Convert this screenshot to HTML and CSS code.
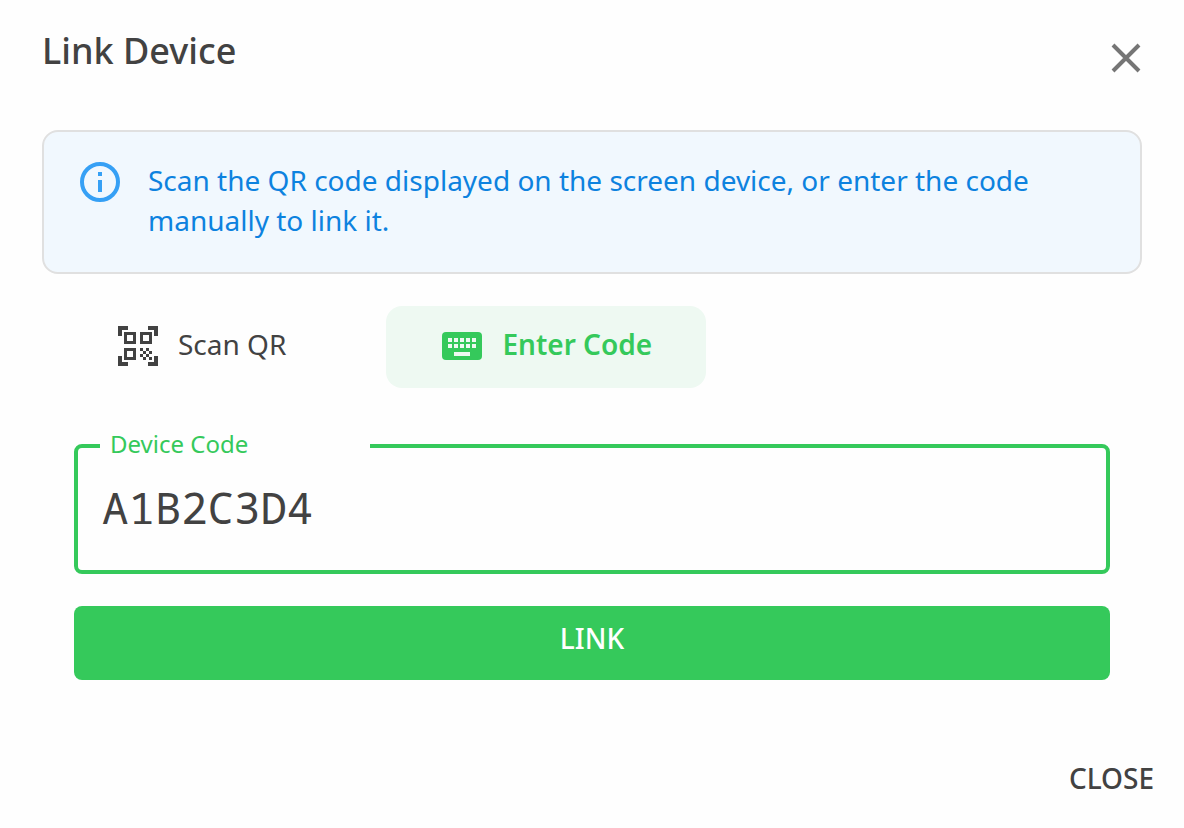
FILE: index.html
```
<!DOCTYPE html>
<html lang="en">
<head>
    <meta charset="UTF-8">
    <meta name="viewport" content="width=device-width, initial-scale=1.0">
    <title>Link Device</title>
    <link rel="stylesheet" href="styles.css">
</head>
<body>

<main class="dialog" role="dialog" aria-labelledby="dialogTitle">
    <header class="dialog-header">
        <h1 class="dialog-title" id="dialogTitle">Link Device</h1>
        <button class="dialog-dismiss" type="button" aria-label="Close dialog">
            <svg class="icon" viewBox="0 0 40 40" aria-hidden="true">
                <path d="M7 7L33 33M33 7L7 33" fill="none" stroke="currentColor" stroke-width="4"/>
            </svg>
        </button>
    </header>

    <div class="banner">
        <svg class="icon banner-icon" viewBox="0 0 40 40" aria-hidden="true">
            <circle cx="20" cy="20" r="18" fill="none" stroke="currentColor" stroke-width="4"/>
            <path d="M18 10h4v4h-4zM18 18h4v12h-4z" fill="currentColor"/>
        </svg>
        <p class="banner-text">Scan the QR code displayed on the screen device, or enter the code manually to link it.</p>
    </div>

    <div class="tabs" role="tablist">
        <button class="tab" type="button" role="tab" aria-selected="false">
            <svg class="icon" viewBox="0 0 40 40" aria-hidden="true" shape-rendering="crispEdges">
                <!-- corner brackets -->
                <path d="M0 0h10v4H4v6H0zM30 0h10v10h-4V4h-6zM0 30h4v6h6v4H0zM36 30h4v10H30v-4h6z" fill="currentColor"/>
                <!-- finder squares -->
                <path d="M7.5 7.5h9v9h-9zM23.5 7.5h9v9h-9zM7.5 23.5h9v9h-9z" fill="none" stroke="currentColor" stroke-width="3"/>
                <path d="M22 22h3v3h-3zM28 22h3v3h-3zM25 25h3v3h-3zM31 25h3v3h-3zM22 28h3v3h-3zM28 28h3v3h-3zM25 31h3v3h-3zM31 31h3v3h-3z" fill="currentColor"/>
            </svg>
            <span>Scan QR</span>
        </button>
        <button class="tab active" type="button" role="tab" aria-selected="true">
            <svg class="icon" viewBox="0 0 40 40" aria-hidden="true">
                <rect y="6" width="40" height="28" rx="4" fill="currentColor"/>
                <path class="keys" d="M6 12h4v4H6zM12 12h4v4h-4zM18 12h4v4h-4zM24 12h4v4h-4zM30 12h4v4h-4zM6 18h4v4H6zM12 18h4v4h-4zM18 18h4v4h-4zM24 18h4v4h-4zM30 18h4v4h-4zM12 26h16v4H12z"/>
            </svg>
            <span>Enter Code</span>
        </button>
    </div>

    <form class="code-form">
        <fieldset class="code-field">
            <legend class="code-legend"><label for="deviceCode">Device Code</label></legend>
            <input class="code-input" id="deviceCode" type="text" value="A1B2C3D4" autocomplete="off" spellcheck="false">
        </fieldset>
        <button class="link-button" type="submit">LINK</button>
    </form>

    <footer class="dialog-footer">
        <button class="close-button" type="button">CLOSE</button>
    </footer>
</main>

</body>
</html>
```
FILE: styles.css
```
* {
    box-sizing: border-box;
}

body {
    margin: 0;
    background-color: #fefefe;
    color: #424242;
    font-family: "Noto Sans", sans-serif;
    font-size: 28px;
    line-height: 40px;
}

button,
input {
    font: inherit;
    color: inherit;
    border: none;
    background: none;
    padding: 0;
}

button {
    cursor: pointer;
}

.dialog {
    padding: 28px 42px;
}

.dialog-header {
    display: flex;
    justify-content: space-between;
    align-items: flex-start;
    margin-bottom: 52px;
}

.dialog-title {
    margin: 0;
    font-size: 36px;
    font-weight: 500;
    line-height: 46px;
}

.dialog-dismiss {
    margin-top: 10px;
    margin-right: -4px;
    height: 40px;
    color: #757575;
}

.icon {
    display: block;
    flex: none;
    width: 40px;
    height: 40px;
}

.banner {
    display: flex;
    gap: 28px;
    padding: 28px 36px 32px;
    border: 2px solid #e0e0e0;
    border-radius: 16px;
    background-color: #f1f8fe;
    color: #0d82df;
}

.banner-icon {
    margin-top: 2px;
    color: #36a0f5;
}

.banner-text {
    margin: 0;
}

.tabs {
    display: flex;
    gap: 46px;
    margin: 32px 20px 0;
}

.tab {
    display: flex;
    align-items: flex-start;
    gap: 20px;
    padding: 20px 54px 22px 56px;
    border-radius: 16px;
    line-height: 36px;
}

.tab.active {
    background-color: #eef9f2;
    color: #35c95b;
    font-weight: 600;
}

.keys {
    fill: #eef9f2;
}

.code-form {
    margin: 38px 32px 0;
}

.code-field {
    min-width: 0;
    margin: 0 0 32px;
    padding: 0 24px 22px;
    border: 4px solid #35c95b;
    border-radius: 8px;
}

.code-legend {
    width: 270px;
    margin-left: -2px;
    padding: 0 10px 4px;
    color: #35c95b;
    font-size: 24px;
    line-height: 36px;
}

.code-input {
    display: block;
    width: 100%;
    height: 82px;
    outline: none;
    font-family: "Noto Sans Mono", "DejaVu Sans Mono", monospace;
    font-size: 44px;
}

.link-button {
    display: block;
    width: 100%;
    padding: 12px 0 22px;
    border-radius: 8px;
    background-color: #35c95b;
    color: #fff;
    font-weight: 500;
}

.dialog-footer {
    display: flex;
    justify-content: flex-end;
    margin: 78px -12px 0 0;
}

.close-button {
    font-weight: 500;
}
```
